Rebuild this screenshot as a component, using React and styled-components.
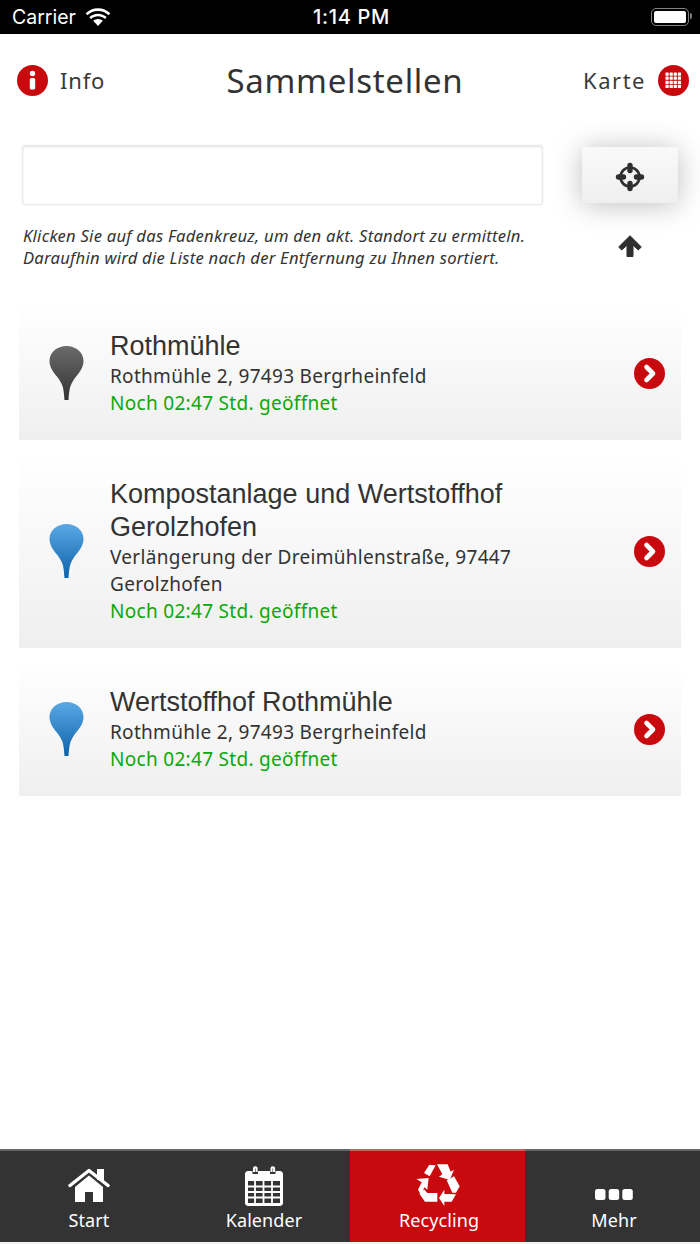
import styled, { createGlobalStyle } from 'styled-components';

const GlobalStyle = createGlobalStyle`
  html, body {
    margin: 0;
    padding: 0;
    background: #fff;
  }
  * {
    box-sizing: border-box;
  }
`;

const UI_FONT = '"Noto Sans", "Open Sans", sans-serif';

const Page = styled.div`
  width: 700px;
  height: 1244px;
  display: flex;
  flex-direction: column;
  overflow: hidden;
  font-family: ${UI_FONT};
  color: #333;
`;

const StatusBar = styled.div`
  height: 34px;
  flex: none;
  background: #000;
  color: #fff;
  display: grid;
  grid-template-columns: 1fr auto 1fr;
  align-items: center;
  padding: 0 9px 0 12px;
  font-family: Inter, sans-serif;
`;

const StatusLeft = styled.div`
  display: flex;
  align-items: center;
  gap: 9px;
  font-size: 19.5px;
`;

const StatusTime = styled.div`
  font-size: 20px;
  font-weight: 500;
  letter-spacing: 0.7px;
`;

const Battery = styled.div`
  justify-self: end;
  position: relative;
  width: 38px;
  height: 18px;
  border: 1.5px solid #808080;
  border-radius: 5px;
  padding: 2px;
  margin-right: 2px;
  &::before {
    content: '';
    display: block;
    height: 100%;
    background: #fff;
    border-radius: 2px;
  }
  &::after {
    content: '';
    position: absolute;
    right: -4px;
    top: 4px;
    width: 2px;
    height: 6px;
    background: #808080;
    border-radius: 0 2px 2px 0;
  }
`;

const Header = styled.header`
  height: 94px;
  flex: none;
  display: grid;
  grid-template-columns: 1fr auto 1fr;
  align-items: center;
  padding: 0 11px 2px 17px;
`;

const HeaderButton = styled.div`
  display: flex;
  align-items: center;
  gap: 12px;
  font-size: 22px;
  letter-spacing: ${(p) => (p.$end ? '1.5px' : '0.8px')};
  justify-content: ${(p) => (p.$end ? 'flex-end' : 'flex-start')};
  color: #3a3a3a;
`;

const PageTitle = styled.h1`
  margin: 0 0 0 -16px;
  font-size: 33px;
  font-weight: 400;
  color: #333;
  letter-spacing: 0.7px;
`;

const SearchSection = styled.section`
  display: grid;
  grid-template-columns: 521px 96px;
  column-gap: 39px;
  padding: 17px 0 0 22px;
  height: 177px;
  flex: none;
`;

const SearchInput = styled.div`
  height: 60px;
  background: #fff;
  border: 1px solid #eaeaea;
  border-radius: 3px;
  box-shadow: inset 0 1px 2px rgba(0, 0, 0, 0.12), 0 0 2px rgba(0, 0, 0, 0.08);
`;

const LocateButton = styled.div`
  width: 96px;
  height: 56px;
  margin-top: 2px;
  padding-top: 3px;
  border-radius: 3px;
  background: linear-gradient(#f9f9f9, #efefef);
  box-shadow: 0 2px 28px rgba(0, 0, 0, 0.26);
  display: flex;
  align-items: center;
  justify-content: center;
`;

const Hint = styled.p`
  margin: 20px 0 0 1px;
  width: 540px;
  font-size: 16.6px;
  line-height: 22px;
  letter-spacing: 0.25px;
  font-style: italic;
  color: #333;
  white-space: nowrap;
`;

const SortArrow = styled.div`
  display: flex;
  justify-content: center;
  margin-top: 32px;
`;

const List = styled.div`
  display: flex;
  flex-direction: column;
  gap: 13px;
  padding: 0 19px;
`;

const Card = styled.article`
  display: flex;
  align-items: center;
  padding: 25px 16px 23px 30px;
  background: linear-gradient(#fff, #efefef);
`;

const CardBody = styled.div`
  flex: 1;
  margin-left: 26px;
  max-width: 440px;
`;

const CardTitle = styled.div`
  font-family: "Liberation Sans", Arial, sans-serif;
  font-size: 27px;
  line-height: 33px;
  color: #333;
`;

const CardLine = styled.div`
  font-size: 19px;
  line-height: 27px;
  letter-spacing: 0.3px;
  color: ${(p) => (p.$open ? '#0aa80a' : '#333')};
`;

const ChevronWrap = styled.div`
  margin-left: auto;
  display: flex;
`;

const TabBar = styled.nav`
  margin-top: auto;
  height: 95px;
  flex: none;
  display: grid;
  grid-template-columns: repeat(4, 1fr);
  background: #333;
  border-bottom: 2px solid #f4f4f4;
`;

const Tab = styled.div`
  display: flex;
  flex-direction: column;
  align-items: center;
  justify-content: flex-end;
  padding: 0 0 10px 3px;
  border-top: 2px solid ${(p) => (p.$active ? '#d45a5e' : '#666')};
  background: ${(p) => (p.$active ? '#c8090e' : 'transparent')};
  color: #fff;
  font-size: 18px;
  line-height: 24px;
  letter-spacing: 0.1px;
`;

const TabIcon = styled.div`
  height: 44px;
  display: flex;
  align-items: center;
  justify-content: center;
  margin-bottom: 1px;
`;

const Dots = styled.div`
  margin-top: 19px;
  display: flex;
`;

function WifiIcon() {
  return (
    <svg width="26" height="19" viewBox="0 0 26 19">
      <path fill="#fff" d="M13 3c4.100 0 7.800 1.600 10.600 4.200l1.700-1.900C22 2.200 17.700.3 13 .3S4 2.200.700 5.300l1.700 1.900C5.200 4.600 8.900 3 13 3z" />
      <path fill="#fff" d="M13 8.300c2.600 0 5 1 6.900 2.700l1.800-1.900C19.400 7 16.300 5.700 13 5.700S6.600 7 4.300 9.100L6.100 11c1.900-1.700 4.300-2.700 6.900-2.700z" />
      <path fill="#fff" d="M13 11c-1.800 0-3.500.700-4.800 1.800L13 18l4.800-5.200C16.500 11.700 14.800 11 13 11z" />
    </svg>
  );
}

function InfoIcon() {
  return (
    <svg width="31" height="31" viewBox="0 0 31 31">
      <circle cx="15.500" cy="15.500" r="15.500" fill="#c8090e" />
      <circle cx="15.500" cy="8.500" r="2.700" fill="#fff" />
      <rect x="12.800" y="13" width="5.400" height="11.500" rx="1.500" fill="#fff" />
    </svg>
  );
}

function GridIcon() {
  const cells = [];
  for (let r = 0; r < 4; r++) {
    for (let c = 0; c < 4; c++) {
      cells.push(<rect key={`${r}-${c}`} x={7.5 + c * 4.1} y={7.5 + r * 4.1} width="3.200" height="3.200" rx="0.500" fill="#fff" />);
    }
  }
  return (
    <svg width="31" height="31" viewBox="0 0 31 31">
      <circle cx="15.500" cy="15.500" r="15.500" fill="#c8090e" />
      {cells}
    </svg>
  );
}

function CrosshairIcon() {
  return (
    <svg width="30" height="30" viewBox="0 0 30 30" fill="none" stroke="#2f2f2f">
      <circle cx="15" cy="15" r="9.500" strokeWidth="2.600" />
      <path d="M15 3.500v5M15 21.500v5M3.500 15h5M21.500 15h5" strokeWidth="5.400" strokeLinecap="round" />
    </svg>
  );
}

function ArrowUpIcon() {
  return (
    <svg width="24" height="22" viewBox="0 0 24 22">
      <path
        fill="#2f2f2f"
        stroke="#2f2f2f"
        strokeWidth="1"
        strokeLinejoin="round"
        d="M12 .7L23.300 12l-3 3L15 10.200V21.500H9V10.200L3.700 15l-3-3z"
      />
    </svg>
  );
}

function PinIcon({ id, top, bottom }) {
  return (
    <svg width="35" height="55" viewBox="0 0 35 55">
      <defs>
        <linearGradient id={id} x1="0" y1="0" x2="0" y2="1">
          <stop offset="0" stopColor={top} />
          <stop offset="1" stopColor={bottom} />
        </linearGradient>
      </defs>
      <path
        fill={`url(#${id})`}
        d="M17.500 0C27 0 34.500 6.500 34.500 15C34.500 21 31 26 27.500 30C25 33 23 36 21.500 40C20.500 43 20 47 19.500 54H15.500C15 47 14.500 43 13.500 40C12 36 10 33 7.500 30C4 26 .5 21 .5 15C.5 6.500 8 0 17.500 0z"
      />
    </svg>
  );
}

function ChevronIcon() {
  return (
    <svg width="31" height="31" viewBox="0 0 31 31">
      <circle cx="15.500" cy="15.500" r="15.500" fill="#c8090e" />
      <path d="M12.500 9l6.500 6.500-6.500 6.500" fill="none" stroke="#fff" strokeWidth="4.600" strokeLinecap="round" strokeLinejoin="round" />
    </svg>
  );
}

function HomeIcon() {
  return (
    <svg width="42" height="34" viewBox="0 0 42 34">
      <path d="M2 17.500L21 2.500L40 17.500" fill="none" stroke="#fff" strokeWidth="3.400" strokeLinecap="round" strokeLinejoin="round" />
      <rect x="29" y="1" width="7" height="11" fill="#fff" />
      <path fill="#fff" d="M7 19L21 7.500L35 19V34H25V24H17V34H7z" />
    </svg>
  );
}

function CalendarIcon() {
  return (
    <svg width="38" height="41" viewBox="0 0 38 41">
      <path
        fill="#fff"
        fillRule="evenodd"
        d="M3 6h4.500v3h5.500V6h12v3h5.500V6H35c1.600 0 3 1.400 3 3v29c0 1.600-1.400 3-3 3H3c-1.600 0-3-1.400-3-3V9c0-1.600 1.400-3 3-3zM3 16v22h32V16H3z"
      />
      <path d="M9 7V3.500a1.300 1.300 0 0 1 2.600 0V7M26.500 7V3.500a1.300 1.300 0 0 1 2.600 0V7" fill="none" stroke="#fff" strokeWidth="2" />
      <path d="M3 21.500h32M3 27h32M3 32.500h32M10 16v22M18.500 16v22M27 16v22" stroke="#fff" strokeWidth="1.800" />
    </svg>
  );
}

function RecycleIcon() {
  return (
    <svg width="60" height="52" viewBox="0 0 180 156" fill="#fff">
      <polygon points="45,42 61,17 80,19 62,52" />
      <polygon points="84,16 116,16 125,38 135,32 122,63 90,53 100,46" />
      <polygon points="113,64 135,52 152,82 141,101 130,101" />
      <polygon points="106,92 90,117 106,141 106,128 128,128 141,106 106,105" />
      <polygon points="45,91 55,102 85,102 85,128 48,128 31,104" />
      <polygon points="22,60 59,57 55,92 46,85 36,108 27,92 38,70" />
    </svg>
  );
}

function DotsIcon() {
  return (
    <svg width="38" height="11" viewBox="0 0 38 11">
      <rect x="0" y="0" width="10.500" height="11" rx="2.500" fill="#fff" />
      <rect x="13.700" y="0" width="10.500" height="11" rx="2.500" fill="#fff" />
      <rect x="27.300" y="0" width="10.500" height="11" rx="2.500" fill="#fff" />
    </svg>
  );
}

const places = [
  {
    id: 'pin-1',
    name: 'Rothmühle',
    address: 'Rothmühle 2, 97493 Bergrheinfeld',
    pin: ['#6b6b6b', '#333333'],
  },
  {
    id: 'pin-2',
    name: 'Kompostanlage und Wertstoffhof Gerolzhofen',
    address: 'Verlängerung der Dreimühlenstraße, 97447 Gerolzhofen',
    pin: ['#5aa9e6', '#0d62a8'],
  },
  {
    id: 'pin-3',
    name: 'Wertstoffhof Rothmühle',
    address: 'Rothmühle 2, 97493 Bergrheinfeld',
    pin: ['#5aa9e6', '#0d62a8'],
  },
];

export default function App() {
  return (
    <Page>
      <GlobalStyle />
      <StatusBar>
        <StatusLeft>
          Carrier <WifiIcon />
        </StatusLeft>
        <StatusTime>1:14 PM</StatusTime>
        <Battery />
      </StatusBar>
      <Header>
        <HeaderButton>
          <InfoIcon /> Info
        </HeaderButton>
        <PageTitle>Sammelstellen</PageTitle>
        <HeaderButton $end>
          Karte <GridIcon />
        </HeaderButton>
      </Header>
      <SearchSection>
        <div>
          <SearchInput />
          <Hint>
            Klicken Sie auf das Fadenkreuz, um den akt. Standort zu ermitteln.
            <br />
            Daraufhin wird die Liste nach der Entfernung zu Ihnen sortiert.
          </Hint>
        </div>
        <div>
          <LocateButton>
            <CrosshairIcon />
          </LocateButton>
          <SortArrow>
            <ArrowUpIcon />
          </SortArrow>
        </div>
      </SearchSection>
      <List>
        {places.map((place) => (
          <Card key={place.id}>
            <PinIcon id={place.id} top={place.pin[0]} bottom={place.pin[1]} />
            <CardBody>
              <CardTitle>{place.name}</CardTitle>
              <CardLine>{place.address}</CardLine>
              <CardLine $open>Noch 02:47 Std. geöffnet</CardLine>
            </CardBody>
            <ChevronWrap>
              <ChevronIcon />
            </ChevronWrap>
          </Card>
        ))}
      </List>
      <TabBar>
        <Tab>
          <TabIcon>
            <HomeIcon />
          </TabIcon>
          Start
        </Tab>
        <Tab>
          <TabIcon>
            <CalendarIcon />
          </TabIcon>
          Kalender
        </Tab>
        <Tab $active>
          <TabIcon>
            <RecycleIcon />
          </TabIcon>
          Recycling
        </Tab>
        <Tab>
          <TabIcon>
            <Dots>
              <DotsIcon />
            </Dots>
          </TabIcon>
          Mehr
        </Tab>
      </TabBar>
    </Page>
  );
}
